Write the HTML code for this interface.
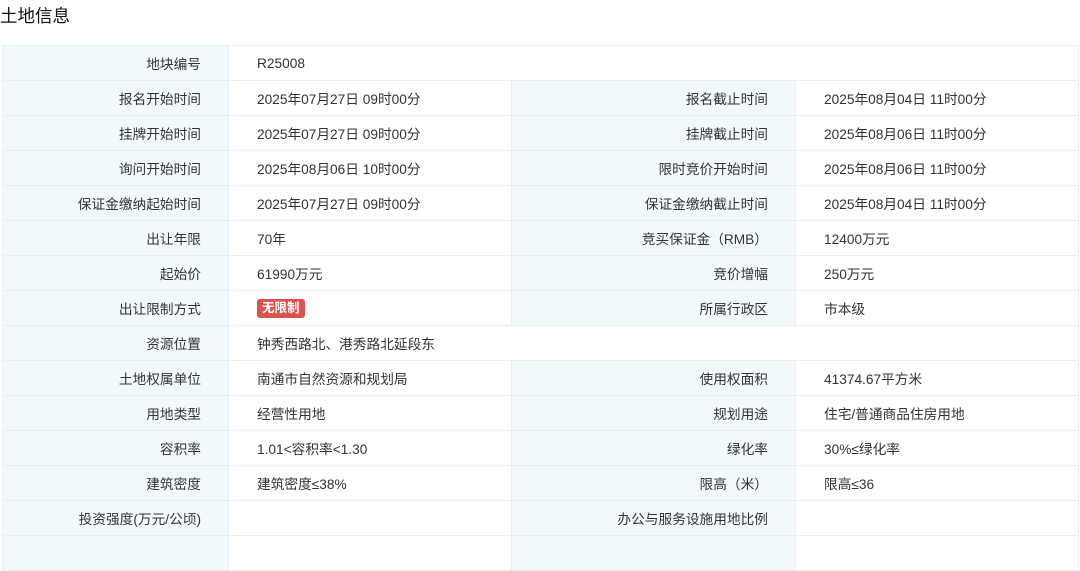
<!DOCTYPE html>
<html><head><meta charset="utf-8"><style>
*{margin:0;padding:0;box-sizing:border-box}
body{width:1080px;height:542px;overflow:hidden;background:#fff;font-family:"Liberation Sans","Noto Sans CJK SC",sans-serif;color:#333;font-size:13.7px}
h1{position:absolute;left:0;top:3px;font-size:17.5px;font-weight:normal;color:#111}
table{position:absolute;left:2px;top:45px;width:1076px;border-collapse:collapse;table-layout:fixed}
td{height:35px;border:1px solid #e9eef2;padding:0 28px;vertical-align:middle;white-space:nowrap}
td.l{background:#f2f9fd;text-align:right;padding-right:27px}
.b{display:inline-block;background:#d9534f;color:#fff;font-weight:bold;font-size:12.5px;padding:1px 5px;border-radius:3px;line-height:17px}
</style></head><body>
<h1>土地信息</h1>
<table>
<colgroup><col style="width:226px"><col style="width:283px"><col style="width:284px"><col style="width:283px"></colgroup>
<tr><td class="l">地块编号</td><td colspan="3">R25008</td></tr>
<tr><td class="l">报名开始时间</td><td>2025年07月27日 09时00分</td><td class="l">报名截止时间</td><td>2025年08月04日 11时00分</td></tr>
<tr><td class="l">挂牌开始时间</td><td>2025年07月27日 09时00分</td><td class="l">挂牌截止时间</td><td>2025年08月06日 11时00分</td></tr>
<tr><td class="l">询问开始时间</td><td>2025年08月06日 10时00分</td><td class="l">限时竞价开始时间</td><td>2025年08月06日 11时00分</td></tr>
<tr><td class="l">保证金缴纳起始时间</td><td>2025年07月27日 09时00分</td><td class="l">保证金缴纳截止时间</td><td>2025年08月04日 11时00分</td></tr>
<tr><td class="l">出让年限</td><td>70年</td><td class="l">竞买保证金（RMB）</td><td>12400万元</td></tr>
<tr><td class="l">起始价</td><td>61990万元</td><td class="l">竞价增幅</td><td>250万元</td></tr>
<tr><td class="l">出让限制方式</td><td><span class="b">无限制</span></td><td class="l">所属行政区</td><td>市本级</td></tr>
<tr><td class="l">资源位置</td><td colspan="3">钟秀西路北、港秀路北延段东</td></tr>
<tr><td class="l">土地权属单位</td><td>南通市自然资源和规划局</td><td class="l">使用权面积</td><td>41374.67平方米</td></tr>
<tr><td class="l">用地类型</td><td>经营性用地</td><td class="l">规划用途</td><td>住宅/普通商品住房用地</td></tr>
<tr><td class="l">容积率</td><td>1.01&lt;容积率&lt;1.30</td><td class="l">绿化率</td><td>30%≤绿化率</td></tr>
<tr><td class="l">建筑密度</td><td>建筑密度≤38%</td><td class="l">限高（米）</td><td>限高≤36</td></tr>
<tr><td class="l">投资强度(万元/公顷)</td><td></td><td class="l">办公与服务设施用地比例</td><td></td></tr>
<tr><td class="l"></td><td></td><td class="l"></td><td></td></tr>
</table>
</body></html>
